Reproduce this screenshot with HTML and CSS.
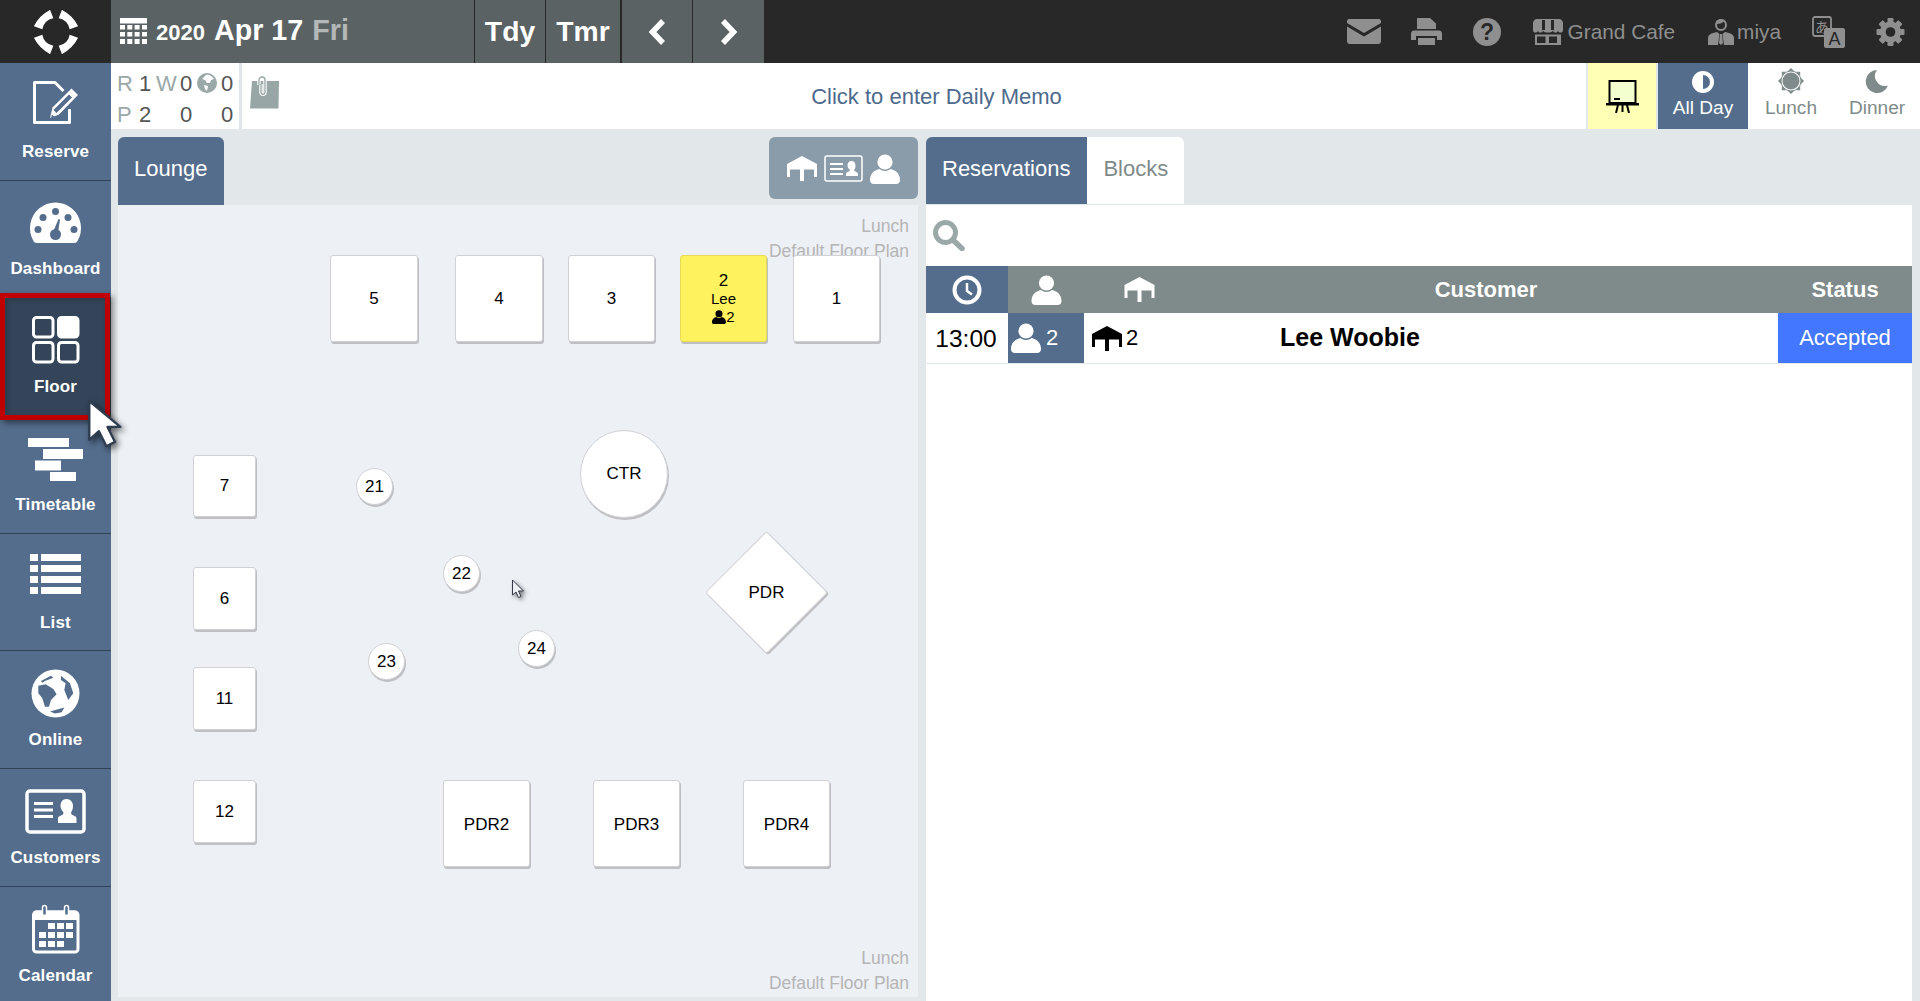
FILE: index.html
```html
<!DOCTYPE html>
<html lang="en">
<head>
<meta charset="utf-8">
<title>Floor</title>
<link rel="stylesheet" href="styles.css">
</head>
<body>
<svg class="defs" width="0" height="0" aria-hidden="true">
  <symbol id="i-person" viewBox="0 0 30 30"><circle cx="15" cy="8" r="7.6"/><path d="M0 26c0-7 5-10 9.500-11 3 2.500 8 2.500 11 0C25 16 30 19 30 26c0 2.500-1.500 4-4 4H4c-2.500 0-4-1.500-4-4z"/></symbol>
  <symbol id="i-table" viewBox="0 0 30 25"><path d="M15 0l15 8v13h-3V13.500H17V25h-4V13.500H3V21H0V8z"/></symbol>
</svg>

<header class="topbar">
  <div class="logo">
    <svg width="44" height="44" viewBox="-22 -22 44 44" fill="#fff">
      <path d="M-11.500-19.800Q0-23.500 11.500-19.800L7.800-11.600A14 14 0 0 0-7.800-11.600Z" transform="rotate(45)"/>
      <path d="M-11.500-19.800Q0-23.500 11.500-19.800L7.800-11.600A14 14 0 0 0-7.800-11.600Z" transform="rotate(135)"/>
      <path d="M-11.500-19.800Q0-23.500 11.500-19.800L7.800-11.600A14 14 0 0 0-7.800-11.600Z" transform="rotate(225)"/>
      <path d="M-11.500-19.800Q0-23.500 11.500-19.800L7.800-11.600A14 14 0 0 0-7.800-11.600Z" transform="rotate(315)"/>
    </svg>
  </div>
  <div class="datebar">
    <div class="date">
      <svg class="cal-mini" width="27" height="27" viewBox="0 0 27 27" fill="#fff"><rect width="27" height="5.500"/><rect y="7" width="5" height="4.500"/><rect x="7.300" y="7" width="5" height="4.500"/><rect x="14.600" y="7" width="5" height="4.500"/><rect x="22" y="7" width="5" height="4.500"/><rect y="14" width="5" height="4.500"/><rect x="7.300" y="14" width="5" height="4.500"/><rect x="14.600" y="14" width="5" height="4.500"/><rect x="22" y="14" width="5" height="4.500"/><rect y="21" width="5" height="5"/><rect x="7.300" y="21" width="5" height="5"/><rect x="14.600" y="21" width="5" height="5"/><rect x="22" y="21" width="5" height="5"/></svg>
      <span class="year">2020</span><span class="day">Apr 17</span><span class="dow">Fri</span>
    </div>
    <div class="dbtn btn-tdy">Tdy</div>
    <div class="dbtn btn-tmr">Tmr</div>
    <div class="dbtn btn-prev"><svg width="19" height="28" viewBox="0 0 19 28"><path d="M15 3L4.500 14 15 25" fill="none" stroke="#fff" stroke-width="5.500"/></svg></div>
    <div class="dbtn btn-next"><svg width="19" height="28" viewBox="0 0 19 28"><path d="M4 3l10.500 11L4 25" fill="none" stroke="#fff" stroke-width="5.500"/></svg></div>
  </div>
  <div class="tools">
    <svg class="tool-mail" width="34" height="25" viewBox="0 0 34 25" fill="#8f8f8f"><path d="M2 0h30c1 0 2 1 2 2v2L17 14 0 4V2C0 1 1 0 2 0z"/><path d="M0 7.500l17 10 17-10V22c0 2-1 3-3 3H3c-2 0-3-1-3-3z"/></svg>
    <svg width="31" height="27" viewBox="0 0 31 27" fill="#8f8f8f"><path d="M6 0h13l6 5.500V11H6z"/><path d="M3 12.500h25c2 0 3 1.500 3 3V22h-5v-4H5v4H0v-6.500c0-1.500 1-3 3-3z"/><path d="M7 20h17v7H7z"/></svg>
    <svg width="28" height="28" viewBox="0 0 28 28"><circle cx="14" cy="14" r="14" fill="#8f8f8f"/><text x="14" y="22" class="help-q">?</text></svg>
    <span class="tool-text tool-store">
      <svg width="30" height="26" viewBox="0 0 30 26" fill="#8f8f8f"><path d="M4 0h22c2 0 4 2 4 4v7c0 2-1 2.500-2.500 2.500S25 13 25 11c0 2-1 2.500-2.500 2.500S20 13 20 11c0 2-2.500 2.500-5 2.500S10 13 10 11c0 2-1 2.500-2.500 2.500S5 13 5 11c0 2-1 2.500-2.500 2.500S0 13 0 11V4c0-2 2-4 4-4z"/><path d="M2 15.500h26V26H2zm2 2v6.500h8.500v-6.500zm12 0V24h8v-6.500z" fill-rule="evenodd"/><rect x="6" y="19.500" width="4.500" height="3" fill="#282828"/><path d="M9 1h3v10H9zM18 1h3v10h-3z" fill="#282828"/></svg>
      Grand Cafe
    </span>
    <span class="tool-text tool-user">
      <svg width="30" height="26" viewBox="0 0 30 26" fill="#8f8f8f"><circle cx="15" cy="6" r="5" fill="none" stroke="#8f8f8f" stroke-width="2"/><path d="M11 5c3 0 6-1 7-3l2 3-1-4-5-1-4 2z"/><path d="M2 26v-7c0-3 3-5 9-6l2.500 2-1.500 11zM28 26v-7c0-3-3-5-9-6l-2.500 2 1.500 11z"/><path d="M14 15h2l1 9-2 2-2-2z"/></svg>
      miya
    </span>
    <svg width="33" height="32" viewBox="0 0 33 32"><rect x="1" y="1" width="18" height="19" rx="2" fill="none" stroke="#8f8f8f" stroke-width="1.800"/><text x="10" y="15.500" class="lang-ja">あ</text><path d="M14 12h17c1 0 2 1 2 2v16c0 1-1 2-2 2H14c-1 0-2-1-2-2V14c0-1 1-2 2-2z" fill="#8f8f8f"/><text x="22.500" y="29" class="lang-a">A</text></svg>
    <svg width="29" height="28" viewBox="-14.500 -14 29 28" fill="#8f8f8f"><circle r="7.500" fill="none" stroke="#8f8f8f" stroke-width="6"/><rect x="-3" y="-14" width="6" height="28" rx="1"/><rect x="-3" y="-14" width="6" height="28" rx="1" transform="rotate(45)"/><rect x="-3" y="-14" width="6" height="28" rx="1" transform="rotate(90)"/><rect x="-3" y="-14" width="6" height="28" rx="1" transform="rotate(135)"/><circle r="4.800" fill="#282828"/></svg>
  </div>
</header>

<div class="app">
  <nav class="sidebar">
    <a class="nav-item">
      <svg class="nav-svg" viewBox="0 0 111 76" fill="#fff"><path d="M69.500 46v13.500h-35v-40H55l8.500 8.500" fill="none" stroke="#fff" stroke-width="3" stroke-linejoin="round"/><path d="M50 55l2.500-10.500L71.500 25.500 78 32 59 51.500z" fill="#fff"/><path d="M53.500 47L69 31.500l3 3L56.500 50z" fill="#546d8c"/><path d="M52 51.500l2.500 2.500-3.500 1z" fill="#546d8c"/></svg>
      <span class="nav-label">Reserve</span>
    </a>
    <a class="nav-item">
      <svg class="nav-svg" viewBox="0 0 111 76"><path d="M37 62c-2 0-3-1-3.500-2A25.500 25.500 0 1 1 77.500 60c-.5 1-1.500 2-3.500 2z" fill="#fff"/><g fill="#546d8c"><circle cx="43" cy="36.500" r="3.500"/><circle cx="55.500" cy="30.500" r="3.500"/><circle cx="68" cy="36.500" r="3.500"/><circle cx="38" cy="48.500" r="3.500"/><circle cx="74" cy="48.500" r="3.500"/><circle cx="55.500" cy="53.500" r="5.500"/><path d="M53.500 50L58.500 38l1.500.5-2 13z"/></g></svg>
      <span class="nav-label nav-label-up">Dashboard</span>
    </a>
    <a class="nav-item nav-active">
      <span class="mark" aria-hidden="true"></span>
      <svg class="nav-svg" viewBox="0 0 111 76"><g fill="none" stroke="#fff" stroke-width="3"><rect x="33.500" y="19.500" width="19.500" height="19.500" rx="3"/><rect x="58.500" y="19.500" width="19.500" height="19.500" rx="3" fill="#fff"/><rect x="33.500" y="44.500" width="19.500" height="19.500" rx="3"/><rect x="58.500" y="44.500" width="19.500" height="19.500" rx="3"/></g></svg>
      <span class="nav-label">Floor</span>
      <svg class="big-cursor" width="43" height="60" viewBox="0 0 40 56"><path d="M3 3v36l9-8 7 14 8-4-7-14h12z" fill="#fff" stroke="#2e3d50" stroke-width="2.200" stroke-linejoin="round"/></svg>
    </a>
    <a class="nav-item">
      <svg class="nav-svg" viewBox="0 0 111 76" fill="#fff"><rect x="28" y="22" width="41" height="9"/><rect x="43" y="33" width="40" height="10"/><rect x="35" y="44.500" width="26" height="10"/><rect x="50" y="56" width="26" height="9"/></svg>
      <span class="nav-label">Timetable</span>
    </a>
    <a class="nav-item">
      <svg class="nav-svg" viewBox="0 0 111 76" fill="#fff"><rect x="30" y="20" width="8" height="7"/><rect x="41" y="20" width="40" height="7"/><rect x="30" y="31" width="8" height="7"/><rect x="41" y="31" width="40" height="7"/><rect x="30" y="42" width="8" height="7"/><rect x="41" y="42" width="40" height="7"/><rect x="30" y="53" width="8" height="7"/><rect x="41" y="53" width="40" height="7"/></svg>
      <span class="nav-label">List</span>
    </a>
    <a class="nav-item">
      <svg class="nav-svg" viewBox="0 0 111 76"><circle cx="55.500" cy="42.500" r="24" fill="#fff"/><g transform="translate(25 14) scale(.333)" fill="#546d8c"><path d="M40 62l22-4 23 14 10 16-17 17-6 20H60L52 100 40 85z"/><path d="M48 48l30-16 7 6-25 10-8 5z"/><path d="M108 32l27 23 10 30-15 20-12-30 4-20-14-10z"/><path d="M75 140l43-12-8 14-20 4z"/></g></svg>
      <span class="nav-label">Online</span>
    </a>
    <a class="nav-item">
      <svg class="nav-svg" viewBox="0 0 111 76" fill="#fff"><rect x="27" y="22" width="57" height="41" rx="3" fill="none" stroke="#fff" stroke-width="3.500"/><rect x="34" y="33" width="19" height="3"/><rect x="34" y="39.500" width="19" height="3"/><rect x="34" y="46" width="19" height="3"/><path d="M66.500 30c4 0 6.500 3 6.500 7 0 3-1 5-2 6.500 0 1.500 1 2.500 2.500 3 1.500.5 3 1 3 3V54H58v-4.500c0-2 1.500-2.500 3-3 1.500-.5 2.500-1.500 2.500-3-1-1.500-3-3.500-3-6.500 0-4 2-7 6-7z"/></svg>
      <span class="nav-label">Customers</span>
    </a>
    <a class="nav-item">
      <svg class="nav-svg" viewBox="0 0 111 76"><rect x="33.500" y="25" width="44.500" height="40" rx="3" fill="none" stroke="#fff" stroke-width="3"/><path d="M33 27c0-2 1-3.500 3-3.500h39c2 0 3 1.500 3 3.500v6H33z" fill="#fff"/><g fill="#546d8c" stroke="#fff" stroke-width="1.500"><rect x="42.500" y="18.500" width="4" height="10" rx="2"/><rect x="64.500" y="18.500" width="4" height="10" rx="2"/></g><g fill="#fff"><rect x="48" y="36" width="7" height="6"/><rect x="57" y="36" width="7" height="6"/><rect x="66" y="36" width="7" height="6"/><rect x="39" y="45" width="7" height="6"/><rect x="48" y="45" width="7" height="6"/><rect x="57" y="45" width="7" height="6"/><rect x="66" y="45" width="7" height="6"/><rect x="39" y="54" width="7" height="6"/><rect x="48" y="54" width="7" height="6"/><rect x="57" y="54" width="7" height="6"/></g></svg>
      <span class="nav-label">Calendar</span>
    </a>
  </nav>

  <main class="content">
    <section class="infobar">
      <div class="counts">
        <span class="k">R</span><span class="v">1</span><span class="k">W</span><span class="v">0</span>
        <svg class="globe-mini" width="20" height="20" viewBox="0 0 20 20"><circle cx="10" cy="10" r="10" fill="#9aa8a8"/><path d="M9 2c3-1 6 1 8 4l-3 1-1 3-3 0-2-3-3-1zM7 12l4 1-1 5-2-2z" fill="#fff"/></svg>
        <span class="v">0</span>
        <span class="k">P</span><span class="v">2</span><span></span><span class="v">0</span><span></span><span class="v">0</span>
      </div>
      <div class="memo">
        <svg class="note" width="30" height="34" viewBox="0 0 30 34"><path d="M2 5h27l-.5 27c-.5 1-3 .5-6 .5H0z" fill="#98a6a6"/><path d="M9 9V4c0-4 6-4 6 0v12c0 3-4 3-4 0V8" fill="none" stroke="#fff" stroke-width="3.500"/><path d="M9 9V4c0-4 6-4 6 0v12c0 3-4 3-4 0V8" fill="none" stroke="#98a6a6" stroke-width="1.300"/></svg>
        <span class="memo-text">Click to enter Daily Memo</span>
      </div>
      <div class="board">
        <svg width="33" height="33" viewBox="0 0 33 33"><rect x="3.500" y="1" width="26" height="22" fill="#f4ffd0" stroke="#000" stroke-width="2"/><rect x="8" y="18" width="6" height="2"/><rect y="23" width="33" height="2.500"/><path d="M12 25l-2 8M16.500 25v7M21 25l2 8" stroke="#000" stroke-width="2" fill="none"/></svg>
      </div>
      <div class="shift shift-on">
        <svg width="24" height="24" viewBox="0 0 24 24"><circle cx="12" cy="12" r="11" fill="#fff"/><path d="M12 5a7 7 0 0 1 0 14z" fill="#546d8c"/></svg>
        <span>All Day</span>
      </div>
      <div class="shift">
        <svg width="26" height="26" viewBox="-13 -13 26 26" fill="#7f8b8b"><circle r="8.500"/><circle r="10" fill="none" stroke="#7f8b8b" stroke-width="1"/><path d="M-3-10L0-13 3-10z"/><path d="M-3-10L0-13 3-10z" transform="rotate(45)"/><path d="M-3-10L0-13 3-10z" transform="rotate(90)"/><path d="M-3-10L0-13 3-10z" transform="rotate(135)"/><path d="M-3-10L0-13 3-10z" transform="rotate(180)"/><path d="M-3-10L0-13 3-10z" transform="rotate(225)"/><path d="M-3-10L0-13 3-10z" transform="rotate(270)"/><path d="M-3-10L0-13 3-10z" transform="rotate(315)"/></svg>
        <span>Lunch</span>
      </div>
      <div class="shift">
        <svg width="26" height="26" viewBox="0 0 26 26" fill="#7f8b8b"><path d="M13 2a11.500 11.500 0 1 0 11 15.500A10 10 0 0 1 13 2z"/></svg>
        <span>Dinner</span>
      </div>
    </section>

    <section class="panels">
      <div class="left">
        <div class="tabbar">
          <div class="tab tab-on tab-solo">Lounge</div>
          <div class="view-toggle">
            <svg width="30" height="25" fill="#fff"><use href="#i-table"/></svg>
            <svg width="39" height="27" viewBox="0 0 39 27"><rect x="1" y="1" width="37" height="25" rx="2" fill="none" stroke="#fff" stroke-width="1.500"/><path d="M6 8h13v2H6zM6 13h13v2H6zM6 18h13v2H6z" fill="#fff"/><path d="M27.500 6c2.500 0 4 2 4 4.500 0 2-.5 3.500-1.500 4.500 0 1.500 4 2 4 4v2H22v-2c0-2 4-2.500 4-4-1-1-2.500-2.500-2.500-4.500 0-2.500 1.500-4.500 4-4.500z" fill="#fff"/></svg>
            <svg width="30" height="30" fill="#fff"><use href="#i-person"/></svg>
          </div>
        </div>
        <div class="floor">
          <div class="plan-label plan-top">Lunch<br>Default Floor Plan</div>
          <div class="plan-label plan-bottom">Lunch<br>Default Floor Plan</div>
          <div class="t sq t5">5</div>
          <div class="t sq t4">4</div>
          <div class="t sq t3">3</div>
          <div class="t sq t2 booked">
            <span class="bk bk-num">2</span><span class="bk">Lee</span>
            <span class="bk bk-size"><svg width="14" height="14" fill="#000"><use href="#i-person"/></svg>2</span>
          </div>
          <div class="t sq t1">1</div>
          <div class="t sm t7">7</div>
          <div class="t sm t6">6</div>
          <div class="t sm t11">11</div>
          <div class="t sm t12">12</div>
          <div class="t round t21">21</div>
          <div class="t round t22">22</div>
          <div class="t round t23">23</div>
          <div class="t round t24">24</div>
          <div class="t big-round tctr">CTR</div>
          <div class="t diamond tpdr"><span>PDR</span></div>
          <div class="t sq tp tp2">PDR2</div>
          <div class="t sq tp tp3">PDR3</div>
          <div class="t sq tp tp4">PDR4</div>
          <svg class="small-cursor" width="16" height="22" viewBox="0 0 16 22"><path d="M1.500 1v15l3.500-3 2.500 5.500 2.500-1-2.500-5.500h5z" fill="#edf0f5" stroke="#333a45" stroke-width="1"/></svg>
        </div>
      </div>

      <div class="right">
        <div class="tabbar">
          <div class="tab tab-on">Reservations</div>
          <div class="tab tab-off">Blocks</div>
        </div>
        <div class="res">
          <div class="search">
            <svg width="32" height="31" viewBox="0 0 32 31"><circle cx="12.500" cy="12.500" r="10" fill="none" stroke="#9aa8a8" stroke-width="5"/><path d="M20 20l9 8.500" stroke="#9aa8a8" stroke-width="5.500" stroke-linecap="round"/></svg>
          </div>
          <div class="res-head">
            <div class="c c-time"><svg width="30" height="30" viewBox="0 0 30 30"><circle cx="15" cy="15" r="12.500" fill="none" stroke="#fff" stroke-width="4"/><path d="M15 8v8l5 3.500" fill="none" stroke="#fff" stroke-width="2.500"/></svg></div>
            <div class="c"><svg width="31" height="30" fill="#fff"><use href="#i-person"/></svg></div>
            <div class="c"><svg width="31" height="25" fill="#fff"><use href="#i-table"/></svg></div>
            <div class="c">Customer</div>
            <div class="c">Status</div>
          </div>
          <div class="res-row">
            <div class="c r-time">13:00</div>
            <div class="c r-size"><svg width="30" height="30" fill="#fff"><use href="#i-person"/></svg><span>2</span></div>
            <div class="c r-table"><svg width="30" height="25" fill="#000"><use href="#i-table"/></svg><span>2</span></div>
            <div class="c r-name">Lee Woobie</div>
            <div class="c r-status">Accepted</div>
          </div>
        </div>
      </div>
    </section>
  </main>
</div>
</body>
</html>
```

FILE: styles.css
```css
* { box-sizing: border-box; }
html, body { margin: 0; height: 100%; }
body {
  width: 1920px;
  height: 1001px;
  overflow: hidden;
  font-family: "Liberation Sans", Arial, sans-serif;
  background: #e2e7ea;
  color: #000;
}
svg { display: block; flex: none; }
.defs { position: absolute; }

/* top bar */
.topbar { display: flex; height: 63px; background: #282828; }
.logo { width: 111px; display: flex; align-items: center; justify-content: center; }
.datebar { width: 653px; display: flex; background: #5a6264; color: #fff; }
.date { width: 363px; display: flex; align-items: center; padding-left: 9px; font-weight: bold; }
.cal-mini { margin-right: 9px; }
.year { font-size: 22px; margin-top: 3px; margin-right: 9px; }
.day { font-size: 28.700px; margin-right: 9px; margin-top: -2px; }
.dow { font-size: 28.700px; margin-top: -2px; color: #b5b8b8; }
.dbtn {
  display: flex; align-items: center; justify-content: center;
  border-left: 1px solid #282828;
  font-size: 28.300px; font-weight: bold;
}
.btn-tdy { width: 71px; }
.btn-tmr { width: 75px; }
.btn-prev { width: 72px; border-left-width: 2px; }
.btn-next { width: 72px; }
.tools {
  flex: 1; display: flex; align-items: center; justify-content: flex-end;
  gap: 31px; padding-right: 15px;
  color: #8f8f8f; font-size: 20.800px;
}
.tool-mail { margin-right: -1px; }
.tool-text { display: flex; align-items: center; gap: 5px; }
.tool-store { margin-left: 1px; margin-right: 0; }
.tool-user { gap: 1px; }
.help-q { font-size: 23px; font-weight: bold; text-anchor: middle; fill: #282828; font-family: "Liberation Sans", sans-serif; }
.lang-ja { font-size: 14px; text-anchor: middle; fill: #8f8f8f; font-family: "Noto Sans CJK JP", sans-serif; }
.lang-a { font-size: 18px; text-anchor: middle; fill: #282828; font-family: "Liberation Sans", sans-serif; }

/* layout */
.app { display: flex; height: 938px; }

/* sidebar */
.sidebar { width: 111px; flex: none; background: #546d8c; position: relative; z-index: 5; }
.nav-item {
  display: block; position: relative; height: 117.700px;
  border-bottom: 1px solid #2f4258;
  color: #fff; text-align: center;
}
.nav-item:last-child { border-bottom: 0; }
.nav-svg { width: 111px; height: 76px; position: relative; }
.nav-label { display: block; position: relative; margin-top: 1px; font-size: 17px; line-height: 24px; font-weight: bold; letter-spacing: .15px; }
.nav-label-up { margin-top: 0; }
.nav-active { background: #344559; border-bottom: 0; }
.mark {
  position: absolute; left: 0; right: 1px; top: -5px; bottom: -4px;
  border: 5px solid #c00000;
  box-shadow: 3px 3px 6px rgba(0, 0, 0, .45), inset 2px 2px 5px rgba(0, 0, 0, .2);
  pointer-events: none;
}
.big-cursor {
  position: absolute; left: 86px; top: 100px; z-index: 6;
  filter: drop-shadow(3px 3px 3px rgba(0, 0, 0, .55));
}

/* info bar */
.content { flex: 1; min-width: 0; display: flex; flex-direction: column; }
.infobar { display: flex; height: 66px; }
.counts {
  width: 128px; background: #fff; padding: 5px 0 0 6px;
  display: grid; grid-template-columns: 22px 17px 24px 17px 24px 12px; grid-auto-rows: 31px;
  align-items: center; font-size: 22px;
}
.k { color: #9aa8a8; }
.v { color: #555; }
.globe-mini { margin-top: -2px; }
.memo {
  flex: 1; margin-left: 3px; background: #fff;
  display: flex; align-items: center; padding-left: 8px;
}
.note { margin-top: -6px; }
.memo-text { flex: 1; text-align: center; font-size: 22px; color: #4d6a8c; margin-left: 7px; padding-top: 2px; }
.board { width: 68px; margin-left: 2px; background: #ffffb5; display: flex; align-items: center; justify-content: center; }
.shift {
  width: 86px; background: #fff; display: flex; flex-direction: column; align-items: center;
  justify-content: flex-end; padding-bottom: 9px; gap: 2px;
  font-size: 19.100px; line-height: 24px; color: #7f8b8b;
}
.shift-on { width: 90px; margin-left: 2px; background: #546d8c; color: #fff; }

/* panels */
.panels { flex: 1; min-height: 0; display: flex; gap: 8px; padding: 8px 8px 0 7px; }
.left { width: 800px; flex: none; }
.right { flex: 1; min-width: 0; display: flex; flex-direction: column; }
.tabbar { display: flex; height: 68px; align-items: flex-start; justify-content: space-between; }
.right .tabbar { justify-content: flex-start; }
.tab {
  height: 67px; display: flex; align-items: center; padding: 0 17px 4px 16px;
  font-size: 22px;
}
.tab-on { background: #546d8c; color: #fff; border-radius: 6px 0 0 0; }
.tab-solo { height: 68px; border-radius: 6px 6px 0 0; }
.tab-off { background: #fff; color: #7f8b8b; border-radius: 0 6px 0 0; padding-right: 16px; }
.view-toggle {
  width: 149px; height: 62px; background: #8a9ca9; border-radius: 6px;
  display: flex; align-items: center; justify-content: center; gap: 7px; padding-top: 1px;
}

/* floor */
.floor { position: relative; height: 792px; background: #edf0f5; overflow: hidden; }
.plan-label { position: absolute; right: 9px; text-align: right; font-size: 17.500px; line-height: 25px; color: #b5b5b5; }
.plan-top { top: 9px; }
.plan-bottom { bottom: 1px; }
.t {
  position: absolute; display: flex; align-items: center; justify-content: center;
  background: #fff; border: 1px solid #cfd1d4; border-radius: 3px;
  box-shadow: 1px 2px 0 #bdbfc3; font-size: 17px; color: #000;
}
.sq { width: 87px; height: 87px; }
.sm { width: 63px; height: 63px; }
.round { width: 37px; height: 37px; border-radius: 50%; }
.big-round { width: 88px; height: 88px; border-radius: 50%; }
.diamond { width: 87px; height: 87px; transform: rotate(45deg); box-shadow: 2px 0 0 #bdbfc3; }
.diamond span { transform: rotate(-45deg); }
.booked { background: #fff25f; border-color: #e8dc55; flex-direction: column; font-size: 15px; line-height: 18px; padding-top: 1px; }
.bk { display: block; }
.bk-num { font-size: 17px; }
.bk-size { display: flex; align-items: center; }
.tp { padding-top: 2px; }

.t5 { left: 212px; top: 50px; width: 88px; }
.t4 { left: 337px; top: 50px; width: 88px; }
.t3 { left: 450px; top: 50px; }
.t2 { left: 562px; top: 50px; }
.t1 { left: 675px; top: 50px; }
.t7 { left: 75px; top: 250px; height: 62px; }
.t6 { left: 75px; top: 362px; }
.t11 { left: 75px; top: 462px; }
.t12 { left: 75px; top: 575px; }
.t21 { left: 238px; top: 263px; }
.t22 { left: 325px; top: 350px; }
.t23 { left: 250px; top: 438px; }
.t24 { left: 400px; top: 425px; padding-top: 1px; }
.tctr { left: 462px; top: 225px; }
.tpdr { left: 605px; top: 344px; }
.tp2 { left: 325px; top: 575px; }
.tp3 { left: 475px; top: 575px; }
.tp4 { left: 625px; top: 575px; }
.small-cursor { position: absolute; left: 393px; top: 374px; filter: drop-shadow(2px 2px 2px rgba(0, 0, 0, .5)); }

/* reservations */
.res { flex: 1; background: #fff; }
.search { height: 61px; padding: 15px 0 0 7px; }
.res-head, .res-row { display: grid; grid-template-columns: 82px 76px 110px 1fr 134px; }
.res-head { height: 47px; background: #7f8b8b; color: #fff; font-size: 22px; font-weight: bold; }
.c { display: flex; align-items: center; justify-content: center; }
.c-time { background: #546d8c; }
.res-row { height: 51px; border-bottom: 1px solid #e2e7ea; font-size: 24px; }
.r-time { font-size: 24.500px; padding: 1px 2px 0 0; }
.r-size { background: #546d8c; color: #fff; justify-content: flex-start; padding-left: 3px; gap: 5px; font-size: 22px; }
.r-table { justify-content: flex-start; padding-left: 8px; gap: 4px; font-size: 22px; }
.r-name { justify-content: flex-start; padding: 0 0 2px 86px; font-size: 25px; font-weight: bold; }
.r-status { background: #4477ff; color: #fff; font-size: 22px; }
```
